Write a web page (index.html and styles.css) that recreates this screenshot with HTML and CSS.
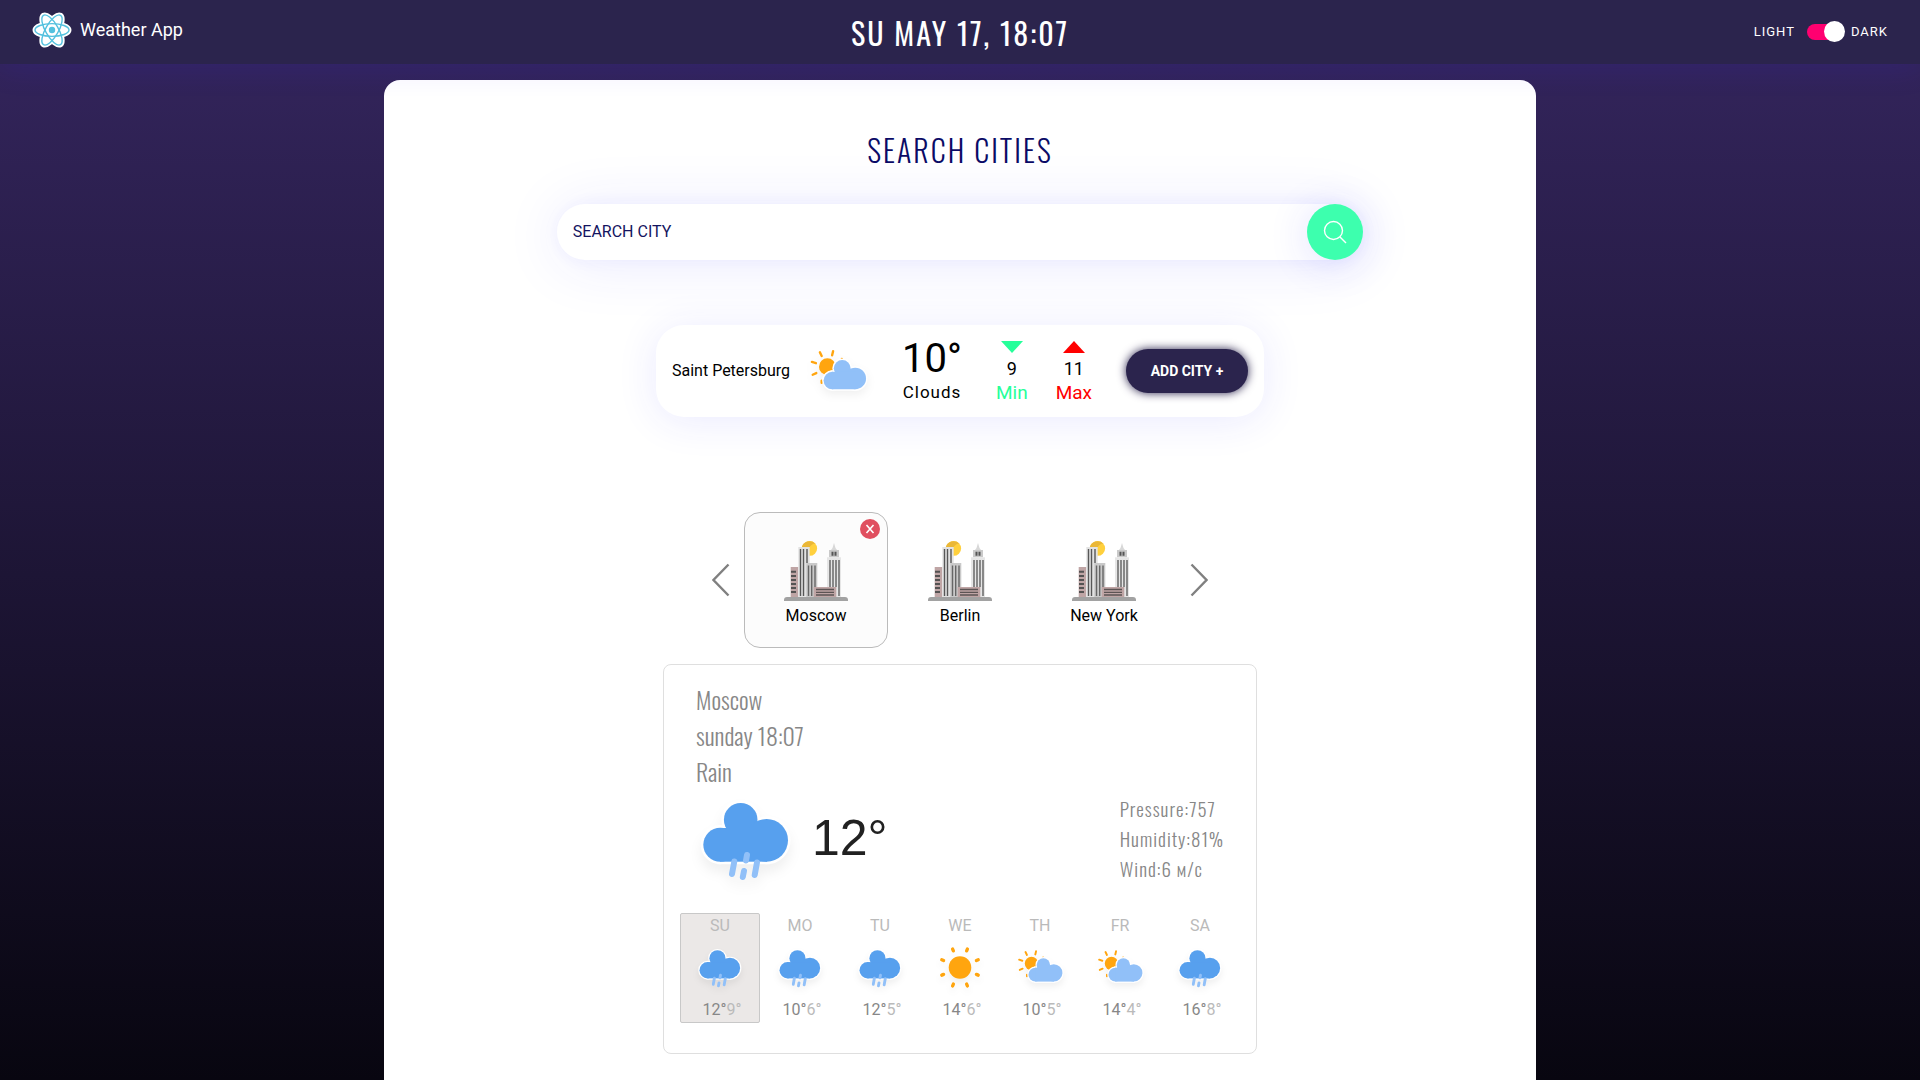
FILE: index.html
```html
<!DOCTYPE html>
<html lang="en">
<head>
<meta charset="utf-8">
<meta name="viewport" content="width=device-width, initial-scale=1">
<title>Weather App</title>
<link rel="stylesheet" href="styles.css">
</head>
<body>
<svg class="sprite" aria-hidden="true">
  <defs>
    <symbol id="rain" viewBox="0 0 100 100">
      <g class="cloud-outline">
        <circle cx="24.3" cy="56.7" r="17"/><circle cx="44.7" cy="31.8" r="16.8"/><circle cx="70.6" cy="52.3" r="21.4"/><rect x="24" y="40" width="47" height="33.7"/>
      </g>
      <g class="cloud-dark">
        <circle cx="24.3" cy="56.7" r="17"/><circle cx="44.7" cy="31.8" r="16.8"/><circle cx="70.6" cy="52.3" r="21.4"/><rect x="24" y="40" width="47" height="33.7"/>
      </g>
      <path class="drops" d="M38.3 73.5L36 86M51 67L50 72.5M48 83L46.8 89M61 74.5L58.7 87"/>
    </symbol>
    <symbol id="cloudy" viewBox="0 0 100 100">
      <circle class="sun" cx="32.3" cy="42.8" r="14"/>
      <path class="rays" d="M6.5 34.8L13.2 37M19.8 18.8L22.8 25M41.8 17L40.2 23.8M7.8 56.2L13.8 53.5M22.8 66V69.5M56.5 30V31"/>
      <g class="cloud-outline">
        <circle cx="40.5" cy="65.9" r="14.5"/><circle cx="57" cy="45.6" r="14"/><circle cx="78.7" cy="62.4" r="18"/><rect x="40" y="51.4" width="39" height="29"/>
      </g>
      <g class="cloud-light">
        <circle cx="40.5" cy="65.9" r="14.5"/><circle cx="57" cy="45.6" r="14"/><circle cx="78.7" cy="62.4" r="18"/><rect x="40" y="51.4" width="39" height="29"/>
      </g>
    </symbol>
    <symbol id="sunny" viewBox="0 0 100 100">
      <circle class="sun" cx="50" cy="51" r="23.5"/>
      <path class="rays-wide" d="M34.6 12.6L36.2 16.4M65.4 12.6L63.8 16.4M12 35L15.8 36.6M12 67L15.8 65.4M88 35L84.2 36.6M88 67L84.2 65.4M34.6 89.4L36.2 85.6M65.4 89.4L63.8 85.6"/>
    </symbol>
    <symbol id="skyline" viewBox="0 0 64 64">
      <circle cx="25.7" cy="9.4" r="7.4" fill="#ffd03d"/>
      <path d="M17.8 8a8 7.4 0 0 1 13.5-3.5Q28 4.500 25.700 8z" fill="#eab737"/>
      <path d="M6.700 28h7.600v30H6.700z" fill="#bfa5a5"/>
      <path d="M7 32.700h5M7 37h5M7 41h5M7 45h5M7 49h5M7 53h5" stroke="#545252" stroke-width="2"/>
      <path d="M14.300 8h11.400v50H14.300z" fill="#e2e2e2"/>
      <path d="M16.500 10v47M19.500 10v47M23 10v14" stroke="#575757" stroke-width="1.400"/>
      <path d="M22.300 24h11v34h-11z" fill="#c9c9c9"/>
      <path d="M24.500 26.500V57M27.700 26.500V57M31 26.500V48" stroke="#666" stroke-width="1.400"/>
      <path d="M50 4l1.500 5 1.500 2h-6l1.500-2z" fill="#d8d8d8"/>
      <path d="M45 11h10v7.300H45z" fill="#c9c9c9"/>
      <path d="M47.500 12.700h2v4h-2zM50.500 12.700h2v4h-2z" fill="#555"/>
      <path d="M43 18.300h14V58H43z" fill="#e6e6e6"/>
      <path d="M46 21v27M49 21v27M52 21v27M55 21v36" stroke="#575757" stroke-width="1.300"/>
      <path d="M29.700 48h22.600v10H29.700z" fill="#bfa5a5"/>
      <path d="M32 50.500h18M32 53.300h18M32 56h18" stroke="#5c5454" stroke-width="1.300"/>
      <path d="M0 61q0-3 3-3h58q3 0 3 3v1H0z" fill="#a2a2a2"/>
    </symbol>
  </defs>
</svg>

<header class="topbar">
  <a class="brand" href="#">
    <svg class="brand-logo" viewBox="0 0 40 36" aria-hidden="true">
      <g class="logo-halo">
        <ellipse cx="20" cy="18" rx="17" ry="6.400"/>
        <ellipse cx="20" cy="18" rx="17" ry="6.400" transform="rotate(60 20 18)"/>
        <ellipse cx="20" cy="18" rx="17" ry="6.400" transform="rotate(120 20 18)"/>
      </g>
      <g class="logo-orbit">
        <ellipse cx="20" cy="18" rx="17" ry="6.400"/>
        <ellipse cx="20" cy="18" rx="17" ry="6.400" transform="rotate(60 20 18)"/>
        <ellipse cx="20" cy="18" rx="17" ry="6.400" transform="rotate(120 20 18)"/>
      </g>
      <circle cx="20" cy="18" r="3.200" fill="#53c1de"/>
    </svg>
    <span>Weather App</span>
  </a>
  <time class="clock">SU MAY 17, 18:07</time>
  <label class="theme">
    <span>LIGHT</span>
    <input class="switch" type="checkbox" role="switch" checked>
    <span>DARK</span>
  </label>
</header>

<main class="panel">
  <h1 class="title">SEARCH CITIES</h1>
  <form class="search">
    <input class="search-input" type="text" placeholder="SEARCH CITY" aria-label="Search city">
    <button class="search-button" type="button" aria-label="Search">
      <svg viewBox="0 0 24 24" aria-hidden="true"><circle cx="10.500" cy="10.500" r="9"/><path d="M17 17l6 6"/></svg>
    </button>
  </form>

  <section class="result">
    <span class="result-city">Saint Petersburg</span>
    <svg class="result-icon" aria-hidden="true"><use href="#cloudy"/></svg>
    <div class="result-now">
      <span class="result-temp">10°</span>
      <span class="result-state">Clouds</span>
    </div>
    <div class="range">
      <div class="extreme">
        <svg class="arrow min" viewBox="0 0 22 12" aria-hidden="true"><path d="M0 0h22L11 12z"/></svg>
        <span>9</span>
        <span class="extreme-label min">Min</span>
      </div>
      <div class="extreme">
        <svg class="arrow max" viewBox="0 0 22 12" aria-hidden="true"><path d="M0 12h22L11 0z"/></svg>
        <span>11</span>
        <span class="extreme-label max">Max</span>
      </div>
    </div>
    <button class="add" type="button">ADD CITY +</button>
  </section>

  <section class="carousel">
    <button class="step" type="button" aria-label="Previous"><svg viewBox="0 0 18 34" aria-hidden="true"><path d="M16.500 1.500L1.500 17l15 15.500"/></svg></button>
    <div class="cities">
      <div class="city city-active">
        <svg class="skyline" aria-hidden="true"><use href="#skyline"/></svg>
        <span>Moscow</span>
        <button class="remove" type="button" aria-label="Remove Moscow"><svg viewBox="0 0 20 20" aria-hidden="true"><circle cx="10" cy="10" r="10"/><path d="M6.500 6l7 8M13.500 6l-7 8"/></svg></button>
      </div>
      <div class="city">
        <svg class="skyline" aria-hidden="true"><use href="#skyline"/></svg>
        <span>Berlin</span>
      </div>
      <div class="city">
        <svg class="skyline" aria-hidden="true"><use href="#skyline"/></svg>
        <span>New York</span>
      </div>
    </div>
    <button class="step" type="button" aria-label="Next"><svg viewBox="0 0 18 34" aria-hidden="true"><path d="M1.500 1.500L16.500 17l-15 15.500"/></svg></button>
  </section>

  <section class="forecast">
    <div class="summary">
      <span>Moscow</span>
      <span>sunday 18:07</span>
      <span>Rain</span>
    </div>
    <div class="current">
      <svg class="current-icon" aria-hidden="true"><use href="#rain"/></svg>
      <span class="current-temp">12°</span>
      <div class="facts">
        <span>Pressure:757</span>
        <span>Humidity:81%</span>
        <span>Wind:6 м/с</span>
      </div>
    </div>
    <ul class="days">
      <li class="day day-active"><span>SU</span><svg class="day-icon" aria-hidden="true"><use href="#rain"/></svg><span class="temps"><b>12°</b>9°</span></li>
      <li class="day"><span>MO</span><svg class="day-icon" aria-hidden="true"><use href="#rain"/></svg><span class="temps"><b>10°</b>6°</span></li>
      <li class="day"><span>TU</span><svg class="day-icon" aria-hidden="true"><use href="#rain"/></svg><span class="temps"><b>12°</b>5°</span></li>
      <li class="day"><span>WE</span><svg class="day-icon" aria-hidden="true"><use href="#sunny"/></svg><span class="temps"><b>14°</b>6°</span></li>
      <li class="day"><span>TH</span><svg class="day-icon" aria-hidden="true"><use href="#cloudy"/></svg><span class="temps"><b>10°</b>5°</span></li>
      <li class="day"><span>FR</span><svg class="day-icon" aria-hidden="true"><use href="#cloudy"/></svg><span class="temps"><b>14°</b>4°</span></li>
      <li class="day"><span>SA</span><svg class="day-icon" aria-hidden="true"><use href="#rain"/></svg><span class="temps"><b>16°</b>8°</span></li>
    </ul>
  </section>
</main>
</body>
</html>
```
FILE: styles.css
```css
:root {
  --navy: #2b244d;
  --green: #3dffae;
  --glow: rgba(50, 50, 255, 0.1);
  --display: Oswald, "Roboto Condensed", "Liberation Sans Narrow", "Liberation Sans", sans-serif;
}

* {
  box-sizing: border-box;
}

body {
  margin: 0;
  min-height: 100vh;
  font: 16px/24px Roboto, "Liberation Sans", sans-serif;
  color: #000;
  background: linear-gradient(#35265f, #080610) fixed;
}

button {
  padding: 0;
  border: 0;
  background: none;
  font: inherit;
  cursor: pointer;
}

svg {
  display: block;
}

.sprite {
  position: absolute;
  width: 0;
  height: 0;
}

/* Header */

.topbar {
  position: relative;
  z-index: 1;
  display: grid;
  grid-template-columns: 1fr auto 1fr;
  align-items: center;
  height: 64px;
  padding: 0 32px;
  background: var(--navy);
  box-shadow: 0 4px 32px rgba(50, 30, 255, 0.12);
  color: #fff;
}

.brand {
  display: flex;
  align-items: center;
  gap: 8px;
  padding-bottom: 4px;
  color: inherit;
  font-size: 18px;
  text-decoration: none;
}

.brand-logo {
  width: 40px;
  height: 36px;
}

.logo-halo {
  fill: #fff;
  stroke: #fff;
  stroke-width: 5;
}

.logo-orbit {
  fill: none;
  stroke: #53c1de;
  stroke-width: 1.4;
}

.clock {
  padding-top: 1px;
  font: 400 30px/48px var(--display);
  letter-spacing: 2px;
}

.theme {
  display: flex;
  align-items: center;
  justify-self: end;
  gap: 8px;
  font-size: 13px;
  letter-spacing: 1px;
}

.switch {
  position: relative;
  width: 36px;
  height: 16px;
  margin: 0 0 0 4px;
  border-radius: 8px;
  background: #ff0070;
  appearance: none;
}

.switch::before {
  content: "";
  position: absolute;
  top: -3px;
  right: -2px;
  width: 21px;
  height: 21px;
  border-radius: 50%;
  background: #fff;
}

/* Main panel */

.panel {
  display: flex;
  flex-direction: column;
  align-items: center;
  width: 60%;
  min-height: calc(100vh - 80px);
  margin: 16px auto 0;
  padding: 46px 0 26px;
  border-radius: 16px 16px 0 0;
  background: #fff;
}

.title {
  margin: 0;
  font: 300 30px/48px var(--display);
  letter-spacing: 2px;
  color: #0b0b66;
}

.search {
  display: flex;
  width: 70%;
  height: 56px;
  margin-top: 30px;
  border-radius: 28px;
  background: #fff;
  box-shadow: 0 4px 60px var(--glow), 0 0 16px rgba(50, 50, 255, 0.05);
}

.search-input {
  flex: 1;
  min-width: 0;
  padding: 0 16px;
  border: 0;
  outline: 0;
  background: none;
  font: inherit;
  color: #0b0b66;
}

.search-input::placeholder {
  color: #14145f;
}

.search-button {
  display: grid;
  place-items: center;
  width: 56px;
  border-radius: 50%;
  background: var(--green);
  box-shadow: 0 4px 40px rgba(50, 50, 255, 0.15);
}

.search-button svg {
  width: 24px;
  fill: none;
  stroke: #fff;
  stroke-width: 1.4;
}

/* Search result */

.result {
  display: flex;
  align-items: center;
  width: 608px;
  max-width: 100%;
  min-height: 92px;
  margin-top: 65px;
  padding: 0 16px;
  border-radius: 28px;
  background: #fff;
  box-shadow: 0 4px 40px var(--glow);
}

.result-icon {
  width: 60px;
  height: 60px;
  margin-left: 18px;
  filter: drop-shadow(0 4px 4px rgba(0, 0, 0, 0.06));
}

.result-now {
  display: flex;
  flex-direction: column;
  align-items: center;
  margin-left: 34px;
}

.result-temp {
  font-size: 40px;
  line-height: 42px;
}

.result-state {
  font-size: 17px;
  letter-spacing: 1px;
}

.range {
  display: flex;
  gap: 28px;
  margin: 0 auto;
}

.extreme {
  display: flex;
  flex-direction: column;
  align-items: center;
  padding-top: 4px;
  font-size: 18px;
}

.extreme-label {
  font-size: 19px;
}

.arrow {
  width: 22px;
  height: 12px;
  margin-bottom: 4px;
  fill: currentColor;
}

.min {
  color: #26ff9a;
}

.max {
  color: #f00;
}

.add {
  width: 122px;
  height: 44px;
  border-radius: 22px;
  background: var(--navy);
  box-shadow: 0 0 10px var(--navy);
  color: #fff;
  font-size: 14px;
  font-weight: 700;
}

/* City carousel */

.carousel {
  display: flex;
  align-items: center;
  gap: 14px;
  margin-top: 95px;
}

.step svg {
  width: 18px;
  height: 34px;
  fill: none;
  stroke: #808080;
  stroke-width: 2.4;
}

.cities {
  display: flex;
}

.city {
  position: relative;
  display: flex;
  flex-direction: column;
  align-items: center;
  gap: 1px;
  width: 144px;
  height: 136px;
  padding-top: 26px;
  border: 1px solid transparent;
  border-radius: 16px;
}

.city-active {
  border-color: #bbb;
  background: #fcfcfc;
}

.skyline {
  width: 64px;
  height: 64px;
}

.remove {
  position: absolute;
  top: 6px;
  right: 7px;
}

.remove svg {
  width: 20px;
  height: 20px;
  fill: #e04f5f;
  stroke: none;
}

.remove path {
  stroke: #fff;
  stroke-width: 1.6;
}

/* Forecast */

.forecast {
  width: 594px;
  max-width: 100%;
  margin-top: 16px;
  padding: 16px 16px 30px;
  border: 1px solid #dfdfdf;
  border-radius: 8px;
}

.summary {
  display: flex;
  flex-direction: column;
  padding: 0 16px;
  font: 300 24px/36px var(--display);
  color: #878787;
}

.current {
  display: flex;
  align-items: center;
  height: 98px;
  padding: 0 16px;
}

.current-icon {
  width: 100px;
  height: 100px;
  filter: drop-shadow(0 8px 6px rgba(0, 0, 0, 0.06));
}

.current-temp {
  margin-left: 16px;
  font: 50px/60px "Liberation Sans", sans-serif;
  color: #212121;
}

.facts {
  display: flex;
  flex-direction: column;
  margin-left: auto;
  font: 300 19px/30px var(--display);
  letter-spacing: 1px;
  color: #878787;
}

.days {
  display: grid;
  grid-template-columns: repeat(7, 1fr);
  margin: 26px 0 0;
  padding: 0;
  list-style: none;
  color: #bababa;
}

.day {
  display: flex;
  flex-direction: column;
  align-items: center;
  height: 110px;
  border: 1px solid transparent;
}

.day-active {
  border-color: #c8c8c8;
  border-radius: 2px;
  background: #ebe8e7;
}

.day-icon {
  width: 50px;
  height: 50px;
  margin: 5px 0 7px;
  filter: drop-shadow(0 4px 3px rgba(0, 0, 0, 0.06));
}

.temps {
  padding-left: 4px;
}

.temps b {
  font-weight: 400;
  color: #878787;
}

/* Weather icon parts */

.cloud-outline {
  fill: #fff;
  stroke: #fff;
  stroke-width: 5;
}

.cloud-dark {
  fill: #57a0ee;
}

.cloud-light {
  fill: #91c0f8;
}

.sun {
  fill: #ffa50f;
}

.rays,
.rays-wide,
.drops {
  fill: none;
  stroke: #ffa50f;
  stroke-width: 4;
  stroke-linecap: round;
}

.rays-wide {
  stroke-width: 7;
}

.drops {
  stroke: #91c0f8;
  stroke-width: 6;
}
```
